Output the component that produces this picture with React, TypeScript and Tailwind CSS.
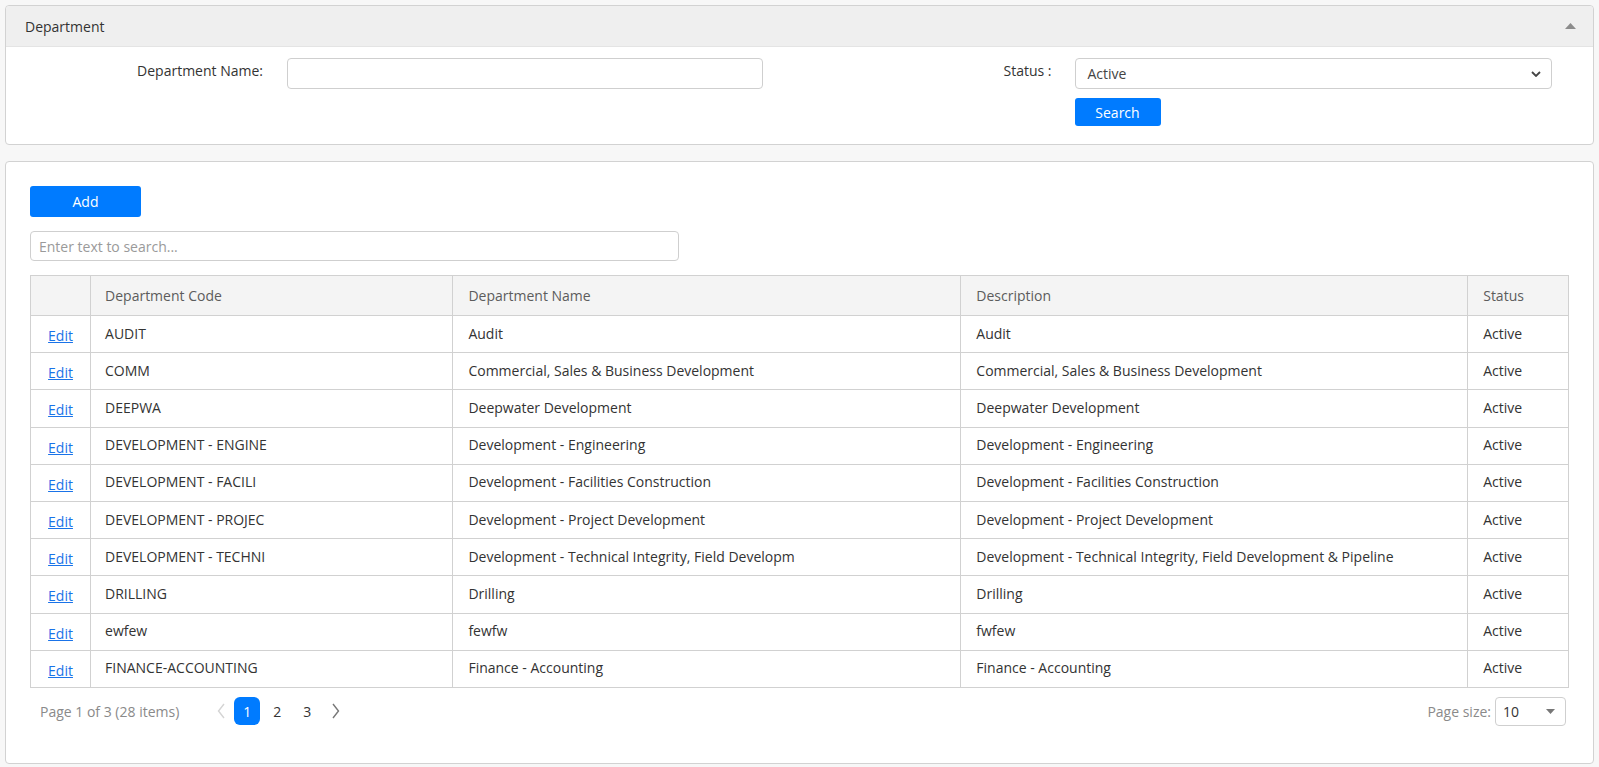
const rows = [
  { code: "AUDIT", name: "Audit", desc: "Audit" },
  { code: "COMM", name: "Commercial, Sales & Business Development", desc: "Commercial, Sales & Business Development" },
  { code: "DEEPWA", name: "Deepwater Development", desc: "Deepwater Development" },
  { code: "DEVELOPMENT - ENGINE", name: "Development - Engineering", desc: "Development - Engineering" },
  { code: "DEVELOPMENT - FACILI", name: "Development - Facilities Construction", desc: "Development - Facilities Construction" },
  { code: "DEVELOPMENT - PROJEC", name: "Development - Project Development", desc: "Development - Project Development" },
  { code: "DEVELOPMENT - TECHNI", name: "Development - Technical Integrity, Field Developm", desc: "Development - Technical Integrity, Field Development & Pipeline" },
  { code: "DRILLING", name: "Drilling", desc: "Drilling" },
  { code: "ewfew", name: "fewfw", desc: "fwfew" },
  { code: "FINANCE-ACCOUNTING", name: "Finance - Accounting", desc: "Finance - Accounting" },
];

export default function App() {
  return (
    <div className="min-h-[767px] bg-[#f7f7f7] px-[5px] pt-[5px] font-['Open_Sans',sans-serif] text-[14px] text-[#333]">
      {/* filter panel */}
      <section className="rounded-[4px] border border-[#d2d2d2] bg-white">
        <div className="flex h-[41px] items-center justify-between rounded-t-[4px] border-b border-[#e4e4e4] bg-[#efefef] pl-[19px] pr-[17px]">
          <span className="text-[#333]">Department</span>
          <svg width="11" height="6" viewBox="0 0 11 6">
            <path d="M5.5 0L11 6H0z" fill="#8c8c8c" />
          </svg>
        </div>
        <div className="flex pt-[11px] pb-[18px]">
          <div className="flex flex-1 items-start">
            <label className="w-[257px] pt-[2px] text-right text-[#333]">Department Name:</label>
            <input className="ml-[24px] h-[31px] w-[476px] rounded-[4px] border border-[#cfcfcf] px-3 outline-none" />
          </div>
          <div className="flex flex-1 items-start">
            <label className="w-[252px] pt-[2px] text-right text-[#333]">Status :</label>
            <div className="ml-[23px] flex w-[477px] flex-col gap-[9px]">
              <div className="flex h-[31px] items-center justify-between rounded-[4px] border border-[#cfcfcf] pl-[12px] pr-[10px]">
                <span className="text-[#444]">Active</span>
                <svg width="10" height="6" viewBox="0 0 10 6">
                  <path d="M1 1l4 4 4-4" fill="none" stroke="#444" strokeWidth="1.8" />
                </svg>
              </div>
              <button className="h-[28px] w-[86px] rounded-[3px] bg-[#007bff] text-white">Search</button>
            </div>
          </div>
        </div>
      </section>

      {/* list panel */}
      <section className="mt-[16px] rounded-[4px] border border-[#d2d2d2] bg-white px-[24px] pt-[24px] pb-[37px]">
        <button className="h-[31px] w-[111px] rounded-[3px] bg-[#007bff] text-white">Add</button>
        <input
          placeholder="Enter text to search..."
          className="mt-[14px] block h-[30px] w-[649px] rounded-[4px] border border-[#cfcfcf] px-[8px] outline-none placeholder:text-[#9a9a9a]"
        />
        <table className="mt-[14px] w-full table-fixed border-collapse border border-[#d1d1d1]">
          <colgroup>
            <col className="w-[59px]" />
            <col className="w-[356px]" />
            <col className="w-[499px]" />
            <col className="w-[498px]" />
            <col className="w-[99px]" />
          </colgroup>
          <thead>
            <tr className="h-[40px] bg-[#f4f4f4] text-left text-[#5c5c5c]">
              <th className="border border-[#d1d1d1]"></th>
              <th className="border border-[#d1d1d1] px-[14px] font-normal">Department Code</th>
              <th className="border border-[#d1d1d1] px-[15px] font-normal">Department Name</th>
              <th className="border border-[#d1d1d1] px-[15px] font-normal">Description</th>
              <th className="border border-[#d1d1d1] px-[15px] font-normal">Status</th>
            </tr>
          </thead>
          <tbody>
            {rows.map((r) => (
              <tr key={r.code} className="h-[37.2px]">
                <td className="border border-[#d1d1d1] pt-[3px] text-center">
                  <a href="#" className="text-[#1a73e8] underline">Edit</a>
                </td>
                <td className="truncate border border-[#d1d1d1] px-[14px] pb-[2px]">{r.code}</td>
                <td className="truncate border border-[#d1d1d1] px-[15px] pb-[2px]">{r.name}</td>
                <td className="truncate border border-[#d1d1d1] px-[15px] pb-[2px]">{r.desc}</td>
                <td className="border border-[#d1d1d1] px-[15px] pb-[2px]">Active</td>
              </tr>
            ))}
          </tbody>
        </table>
        <div className="mt-[9px] flex items-center justify-between pl-[10px] pr-[3px]">
          <div className="flex items-center">
            <span className="text-[#8a8a8a]">Page 1 of 3 (28 items)</span>
            <svg className="ml-[38px]" width="8" height="16" viewBox="0 0 8 16">
              <path d="M7 1L1.5 8 7 15" fill="none" stroke="#d4d4d4" strokeWidth="1.4" />
            </svg>
            <span className="ml-[9px] flex h-[28px] w-[26px] items-center justify-center rounded-[6px] bg-[#007bff] text-white">1</span>
            <span className="ml-[2px] flex h-[28px] w-[30px] items-center justify-center">2</span>
            <span className="flex h-[28px] w-[30px] items-center justify-center">3</span>
            <svg className="ml-[10px]" width="8" height="16" viewBox="0 0 8 16">
              <path d="M1 1l5.5 7L1 15" fill="none" stroke="#777" strokeWidth="1.4" />
            </svg>
          </div>
          <div className="flex items-center">
            <span className="text-[#8a8a8a]">Page size:</span>
            <div className="ml-[4px] flex h-[29px] w-[71px] items-center justify-between rounded-[4px] border border-[#cfcfcf] pl-[7px] pr-[10px]">
              <span>10</span>
              <svg width="9" height="5" viewBox="0 0 9 5">
                <path d="M0 0h9L4.5 5z" fill="#777" />
              </svg>
            </div>
          </div>
        </div>
      </section>
    </div>
  );
}
